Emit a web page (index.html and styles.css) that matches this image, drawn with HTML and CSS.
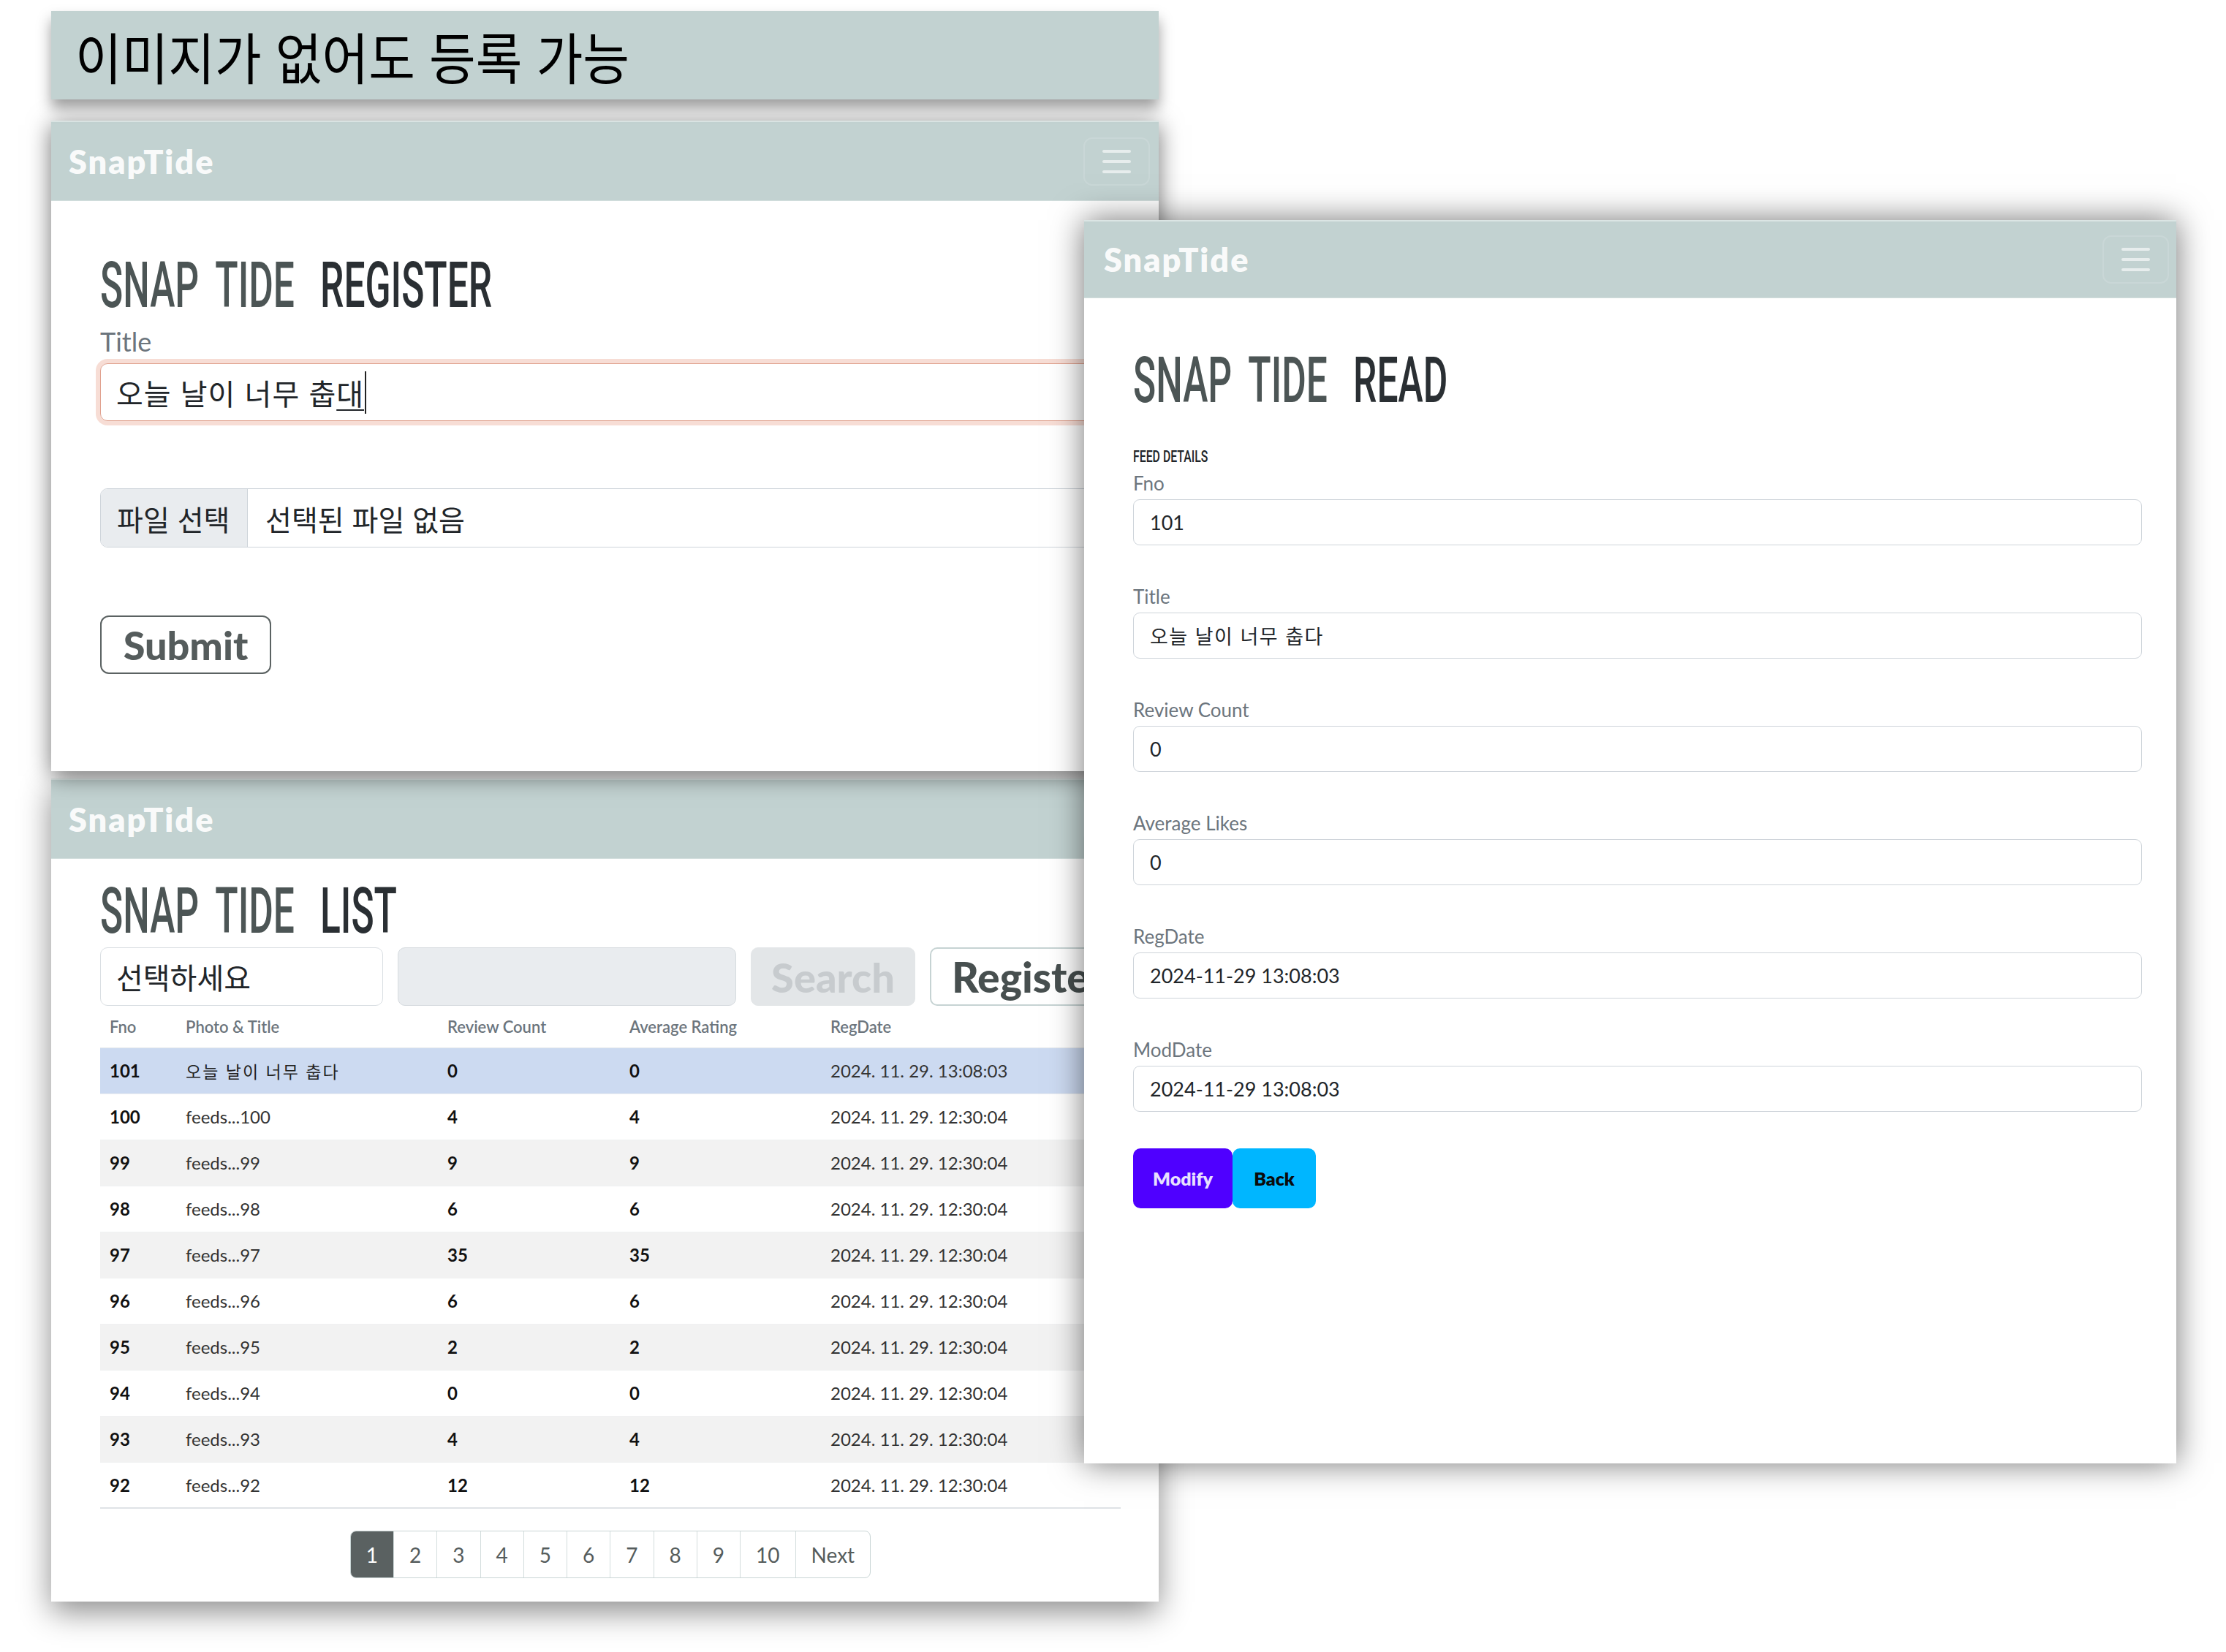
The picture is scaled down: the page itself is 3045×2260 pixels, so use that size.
FILE: index.html
```html
<!DOCTYPE html>
<html lang="ko">
<head>
<meta charset="utf-8">
<title>SnapTide</title>
<link rel="stylesheet" href="styles.css">
</head>
<body>
<div class="canvas">

  <div class="banner"><span class="banner-text">이미지가 없어도 등록 가능</span></div>

  <!-- Register window -->
  <section class="win win-register">
    <nav class="nav">
      <span class="brand">SnapTide</span>
      <span class="toggler"><i></i><i></i><i></i></span>
    </nav>
    <div class="body body-big">
      <h1 class="page-title"><span class="pt"><span class="pt-a">SNAP TIDE</span><span class="pt-b">REGISTER</span></span></h1>
      <label class="big-label">Title</label>
      <div class="big-input focus"><span>오늘 날이 너무 춥<span class="ime">대</span></span></div>
      <div class="file-input">
        <span class="file-btn">파일 선택</span>
        <span class="file-name">선택된 파일 없음</span>
      </div>
      <button class="submit">Submit</button>
    </div>
  </section>

  <!-- List window -->
  <section class="win win-list">
    <nav class="nav">
      <span class="brand">SnapTide</span>
      <span class="toggler"><i></i><i></i><i></i></span>
    </nav>
    <div class="body body-big">
      <h1 class="page-title list-title"><span class="pt"><span class="pt-a">SNAP TIDE</span><span class="pt-b">LIST</span></span></h1>
      <div class="search-row">
        <div class="sel">선택하세요</div>
        <div class="search-input"></div>
        <div class="search-btn">Search</div>
        <div class="register-btn">Register</div>
      </div>
      <table class="tbl">
        <thead>
          <tr><th class="c1">Fno</th><th class="c2">Photo &amp; Title</th><th class="c3">Review Count</th><th class="c4">Average Rating</th><th class="c5">RegDate</th></tr>
        </thead>
        <tbody>
          <tr class="sel-row"><td class="b">101</td><td class="ko">오늘 날이 너무 춥다</td><td class="b">0</td><td class="b">0</td><td>2024. 11. 29. 13:08:03</td></tr>
          <tr><td class="b">100</td><td>feeds...100</td><td class="b">4</td><td class="b">4</td><td>2024. 11. 29. 12:30:04</td></tr>
          <tr class="stripe"><td class="b">99</td><td>feeds...99</td><td class="b">9</td><td class="b">9</td><td>2024. 11. 29. 12:30:04</td></tr>
          <tr><td class="b">98</td><td>feeds...98</td><td class="b">6</td><td class="b">6</td><td>2024. 11. 29. 12:30:04</td></tr>
          <tr class="stripe"><td class="b">97</td><td>feeds...97</td><td class="b">35</td><td class="b">35</td><td>2024. 11. 29. 12:30:04</td></tr>
          <tr><td class="b">96</td><td>feeds...96</td><td class="b">6</td><td class="b">6</td><td>2024. 11. 29. 12:30:04</td></tr>
          <tr class="stripe"><td class="b">95</td><td>feeds...95</td><td class="b">2</td><td class="b">2</td><td>2024. 11. 29. 12:30:04</td></tr>
          <tr><td class="b">94</td><td>feeds...94</td><td class="b">0</td><td class="b">0</td><td>2024. 11. 29. 12:30:04</td></tr>
          <tr class="stripe"><td class="b">93</td><td>feeds...93</td><td class="b">4</td><td class="b">4</td><td>2024. 11. 29. 12:30:04</td></tr>
          <tr><td class="b">92</td><td>feeds...92</td><td class="b">12</td><td class="b">12</td><td>2024. 11. 29. 12:30:04</td></tr>
        </tbody>
      </table>
      <div class="pager-wrap">
        <ul class="pager">
          <li class="active">1</li><li>2</li><li>3</li><li>4</li><li>5</li><li>6</li><li>7</li><li>8</li><li>9</li><li>10</li><li>Next</li>
        </ul>
      </div>
    </div>
  </section>

  <!-- Read window -->
  <section class="win win-read">
    <nav class="nav nav-read">
      <span class="brand">SnapTide</span>
      <span class="toggler"><i></i><i></i><i></i></span>
    </nav>
    <div class="body body-read">
      <h1 class="page-title read-title"><span class="pt"><span class="pt-a">SNAP TIDE</span><span class="pt-b">READ</span></span></h1>
      <div class="feed-details"><span>FEED DETAILS</span></div>
      <div class="field first">
        <label class="sm-label">Fno</label>
        <div class="sm-input">101</div>
      </div>
      <div class="field">
        <label class="sm-label">Title</label>
        <div class="sm-input ko">오늘 날이 너무 춥다</div>
      </div>
      <div class="field">
        <label class="sm-label">Review Count</label>
        <div class="sm-input">0</div>
      </div>
      <div class="field">
        <label class="sm-label">Average Likes</label>
        <div class="sm-input">0</div>
      </div>
      <div class="field">
        <label class="sm-label">RegDate</label>
        <div class="sm-input">2024-11-29 13:08:03</div>
      </div>
      <div class="field">
        <label class="sm-label">ModDate</label>
        <div class="sm-input">2024-11-29 13:08:03</div>
      </div>
      <div class="actions">
        <button class="btn-modify">Modify</button><button class="btn-back">Back</button>
      </div>
    </div>
  </section>

</div>
</body>
</html>
```

FILE: styles.css
```css
* { box-sizing: border-box; }

html, body {
  margin: 0;
  padding: 0;
  background: #ffffff;
}

body {
  font-family: Lato, "Noto Sans", "Noto Sans CJK KR", sans-serif;
  color: #212529;
}

.canvas {
  position: relative;
  width: 3045px;
  height: 2260px;
  overflow: hidden;
  background: #ffffff;
}

/* ---------- banner ---------- */
.banner {
  position: absolute;
  left: 70px;
  top: 15px;
  width: 1515px;
  height: 121px;
  background: #c2d2d1;
  box-shadow: 0 12px 18px rgba(0, 0, 0, 0.38);
  display: flex;
  align-items: center;
  padding-left: 33px;
  z-index: 3;
}

.banner-text {
  display: inline-block;
  font-family: "Noto Sans CJK KR", sans-serif;
  font-size: 76px;
  font-weight: 400;
  color: #000;
  white-space: nowrap;
  transform: scaleX(0.91);
  transform-origin: left center;
}

/* ---------- windows ---------- */
.win {
  position: absolute;
  background: #fff;
  overflow: hidden;
}

.win-register {
  left: 70px;
  top: 165px;
  width: 1515px;
  height: 890px;
  z-index: 2;
  box-shadow: 0 6px 30px rgba(0, 0, 0, 0.55);
}

.win-list {
  left: 70px;
  top: 1065px;
  width: 1515px;
  height: 1126px;
  z-index: 1;
  box-shadow: 0 14px 40px rgba(0, 0, 0, 0.45);
}

.win-read {
  left: 1483px;
  top: 301px;
  width: 1494px;
  height: 1701px;
  z-index: 4;
  box-shadow: 0 0 42px rgba(0, 0, 0, 0.55);
}

/* ---------- navbar ---------- */
.nav {
  height: 110px;
  background: #c2d2d1;
  border-top: 2px solid #dbe5e4;
  border-bottom: 1px solid #d3dfde;
  display: flex;
  align-items: center;
  justify-content: space-between;
  padding: 0 12px 0 24px;
}

.nav-read {
  height: 107px;
  padding: 0 10px 0 27px;
}

.brand {
  font-family: Lato, sans-serif;
  font-weight: 800;
  font-size: 45px;
  color: rgba(255, 255, 255, 0.93);
  letter-spacing: 2px;
}

.toggler {
  width: 91px;
  height: 66px;
  border: 2px solid rgba(255, 255, 255, 0.13);
  border-radius: 12px;
  display: flex;
  flex-direction: column;
  align-items: center;
  justify-content: center;
  gap: 10px;
}

.toggler i {
  display: block;
  width: 39px;
  height: 4px;
  border-radius: 2px;
  background: rgba(255, 255, 255, 0.6);
}

/* ---------- page titles ---------- */
.body-big {
  padding: 0 52px 0 67px;
}

.page-title {
  margin: 71px 0 0 0;
  height: 88px;
  font-family: Roboto, "Liberation Sans", sans-serif;
  font-weight: 500;
  font-size: 88px;
  line-height: 88px;
  white-space: nowrap;
}

.pt {
  display: inline-block;
  transform: scaleX(0.585);
  transform-origin: left center;
  word-spacing: 18px;
}

.pt-a { color: #4c5555; }
.pt-b { color: #2a2f33; margin-left: 60px; }

.list-title { margin-top: 27px; }
.read-title { margin-top: 68px; }

/* ---------- register form ---------- */
.big-label {
  display: block;
  margin-top: 12px;
  font-size: 36px;
  line-height: 43px;
  color: #6c757d;
}

.big-input {
  margin-top: 8px;
  height: 79px;
  border: 1px solid #e0a18e;
  border-radius: 10px;
  box-shadow: 0 0 0 6px rgba(236, 174, 155, 0.42);
  display: flex;
  align-items: center;
  padding-left: 21px;
  font-family: "Noto Sans CJK KR", sans-serif;
  font-size: 40px;
  letter-spacing: 1px;
  color: #212529;
}

.ime {
  text-decoration: underline;
  text-decoration-thickness: 2px;
  text-underline-offset: 6px;
  border-right: 2px solid #222;
  padding-right: 1px;
}

.file-input {
  margin-top: 92px;
  height: 81px;
  border: 1px solid #ced4da;
  border-radius: 10px;
  display: flex;
  align-items: stretch;
  overflow: hidden;
  font-family: "Noto Sans CJK KR", sans-serif;
  font-size: 39px;
  color: #212529;
}

.file-btn {
  width: 201px;
  background: #e9ecef;
  border-right: 1px solid #ced4da;
  display: flex;
  align-items: center;
  padding-left: 22px;
  white-space: nowrap;
}

.file-name {
  display: flex;
  align-items: center;
  padding-left: 24px;
  white-space: nowrap;
}

.submit {
  display: block;
  margin-top: 93px;
  width: 234px;
  height: 80px;
  border: 2px solid #5b6262;
  border-radius: 12px;
  background: #fff;
  font-family: Lato, sans-serif;
  font-weight: 900;
  font-size: 54px;
  color: #555c5c;
  padding: 0;
}

/* ---------- list ---------- */
.search-row {
  margin-top: 6px;
  height: 80px;
  display: flex;
  gap: 20px;
}

.sel {
  width: 387px;
  border: 1px solid #d9dee2;
  border-radius: 10px;
  display: flex;
  align-items: center;
  padding-left: 21px;
  font-family: "Noto Sans CJK KR", sans-serif;
  font-size: 40px;
  color: #212529;
}

.search-input {
  width: 463px;
  background: #e9ecef;
  border: 1px solid #d6dbdf;
  border-radius: 10px;
}

.search-btn {
  width: 225px;
  background: #e3e6e8;
  border: 1px solid #e3e6e8;
  border-radius: 10px;
  display: flex;
  align-items: center;
  justify-content: center;
  font-weight: 900;
  font-size: 56px;
  color: #c7cbce;
}

.register-btn {
  flex: 1;
  border: 2px solid #c6d3d3;
  border-radius: 10px;
  display: flex;
  align-items: center;
  padding-left: 28px;
  font-weight: 900;
  font-size: 57px;
  color: #474f4f;
  white-space: nowrap;
  overflow: hidden;
}

.tbl {
  width: 100%;
  border-collapse: collapse;
  font-family: Lato, "Noto Sans CJK KR", sans-serif;
}

.tbl th {
  height: 57px;
  text-align: left;
  font-weight: 600;
  font-size: 22px;
  color: #6c757d;
  padding: 0 0 0 13px;
  border-bottom: 1px solid #e5e8eb;
}

.tbl td {
  height: 63px;
  padding: 0 0 0 13px;
  font-size: 24px;
  color: #333;
  border-bottom: 1px solid #f0f1f2;
}

.tbl .c1 { width: 104px; }
.tbl .c2 { width: 358px; }
.tbl .c3 { width: 249px; }
.tbl .c4 { width: 275px; }

.tbl td.b { font-weight: 700; color: #111; }
.tbl td.ko {
  font-family: "Noto Sans CJK KR", sans-serif;
  font-size: 23px;
  letter-spacing: 2px;
  color: #222;
}

.tbl tr.sel-row td { background: #ccdaf1; }
.tbl tr.stripe td { background: #f2f2f2; }
.tbl tbody tr:last-child td { border-bottom: 2px solid #dfe3e6; }

.pager-wrap {
  margin-top: 30px;
  display: flex;
  justify-content: center;
}

.pager {
  list-style: none;
  margin: 0;
  padding: 0;
  display: flex;
  border: 1px solid #c9d5d5;
  border-radius: 8px;
  overflow: hidden;
}

.pager li {
  height: 63px;
  padding: 0 21px;
  display: flex;
  align-items: center;
  font-size: 28px;
  color: #555c5c;
  border-left: 1px solid #d3dddd;
}

.pager li:first-child { border-left: none; }

.pager li.active {
  background: #5a6161;
  color: #fff;
}

/* ---------- read ---------- */
.body-read {
  padding: 0 47px 0 67px;
}

.feed-details {
  margin-top: 50px;
  height: 22px;
  font-family: Roboto, sans-serif;
  font-weight: 500;
  font-size: 22px;
  line-height: 22px;
  white-space: nowrap;
}

.feed-details span {
  display: inline-block;
  transform: scaleX(0.72);
  transform-origin: left center;
  color: #212529;
}

.field { margin-top: 55px; }
.field.first { margin-top: 10px; }

.sm-label {
  display: block;
  font-size: 26px;
  line-height: 31px;
  color: #6c757d;
}

.sm-input {
  margin-top: 6px;
  height: 63px;
  border: 1px solid #ced4da;
  border-radius: 9px;
  display: flex;
  align-items: center;
  padding-left: 22px;
  font-size: 27px;
  color: #212529;
}

.sm-input.ko {
  font-family: "Noto Sans CJK KR", sans-serif;
  font-size: 27px;
  letter-spacing: 1.5px;
}

.actions {
  margin-top: 50px;
  display: flex;
}

.btn-modify,
.btn-back {
  height: 82px;
  border: none;
  border-radius: 10px;
  font-family: Lato, sans-serif;
  font-weight: 800;
  font-size: 25px;
  padding: 0;
}

.btn-modify {
  width: 136px;
  background: #4f00ff;
  color: #e8e0ff;
}

.btn-back {
  width: 114px;
  background: #00b6ff;
  color: #0b0b0b;
}
```
